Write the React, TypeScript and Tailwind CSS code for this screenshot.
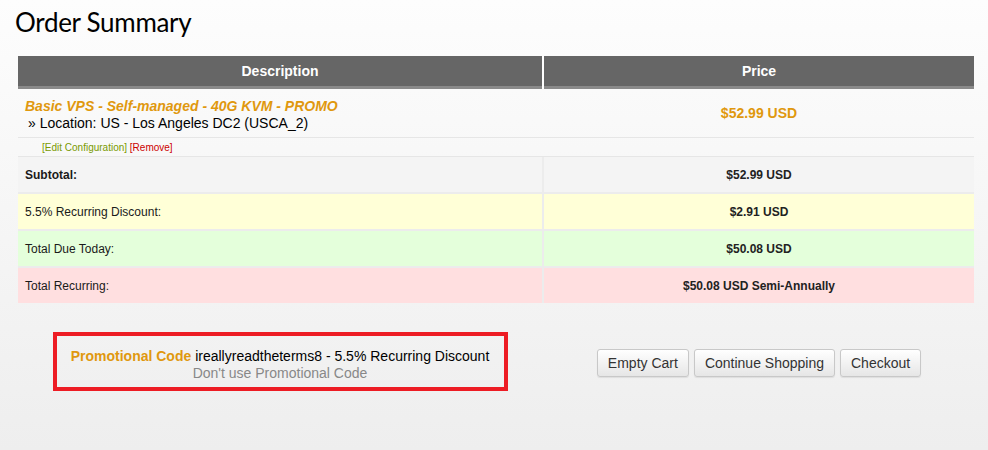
export default function App() {
  const summary = [
    { label: "Subtotal:", price: "$52.99 USD", bg: "bg-[#f4f4f4]", bold: true },
    { label: "5.5% Recurring Discount:", price: "$2.91 USD", bg: "bg-[#ffffd7]", bold: false },
    { label: "Total Due Today:", price: "$50.08 USD", bg: "bg-[#e4ffdb]", bold: false },
    { label: "Total Recurring:", price: "$50.08 USD Semi-Annually", bg: "bg-[#ffdfe0]", bold: false },
  ];

  return (
    <div className="h-[450px] w-[988px] overflow-hidden bg-gradient-to-b from-[#fdfdfd] to-[#eeeeee] font-['Liberation_Sans',Arial,sans-serif] text-[#333]">
      <h1 className="pl-[15px] pt-[2px] font-['Lato',sans-serif] text-[26px] leading-[40px] tracking-[-0.3px] text-black">
        Order Summary
      </h1>

      <div className="ml-[18px] mt-[14px] w-[956px]">
        {/* header */}
        <div className="grid grid-cols-[524px_430px] gap-x-[2px] bg-white text-[14px] font-bold text-white">
          <div className="flex h-[33px] items-center justify-center border-b-[3px] border-[#8a8a8a] bg-[#666]">Description</div>
          <div className="flex h-[33px] items-center justify-center border-b-[3px] border-[#8a8a8a] bg-[#666]">Price</div>
        </div>

        {/* product */}
        <div className="grid grid-cols-[524px_430px] gap-x-[2px] border-b border-[#e6e6e6]">
          <div className="h-[48px] pl-[7px] pt-[9px] text-[14px] leading-[17px]">
            <div className="font-bold italic text-[#e0980e]">Basic VPS - Self-managed - 40G KVM - PROMO</div>
            <div className="pl-[3px] text-black">» Location: US - Los Angeles DC2 (USCA_2)</div>
          </div>
          <div className="flex h-[48px] items-center justify-center text-[14px] font-bold text-[#e0980e]">$52.99 USD</div>
        </div>
        <div className="grid grid-cols-[524px_430px] gap-x-[2px] border-b border-[#e6e6e6]">
          <div className="h-[18px] pl-[24px] pt-[4px] text-[10px] leading-[12px]">
            <span className="text-[#7a9a01]">[Edit Configuration]</span>{" "}
            <span className="text-[#cc0000]">[Remove]</span>
          </div>
          <div className="h-[18px]"></div>
        </div>

        {/* totals */}
        <div className="flex flex-col gap-y-[2px] bg-[#ececec]">
          {summary.map((row) => (
            <div key={row.label} className="grid grid-cols-[524px_430px] gap-x-[2px] text-[12px]">
              <div className={`flex h-[35px] items-center pl-[7px] text-[#1a1a1a] ${row.bg} ${row.bold ? "font-bold" : ""}`}>
                {row.label}
              </div>
              <div className={`flex h-[35px] items-center justify-center font-bold text-[#222] ${row.bg}`}>{row.price}</div>
            </div>
          ))}
        </div>

        {/* promo + actions */}
        <div className="mt-[29px] grid grid-cols-[524px_430px] gap-x-[2px]">
          <div className="flex justify-center">
            <div className="h-[59px] w-[455px] border-[4px] border-[#ed1c24] pt-[12px] text-center text-[14px] leading-[17px]">
              <div>
                <span className="font-bold text-[#e0980e]">Promotional Code</span>{" "}
                <span className="text-black">ireallyreadtheterms8 - 5.5% Recurring Discount</span>
              </div>
              <div className="text-[#888]">Don't use Promotional Code</div>
            </div>
          </div>
          <div className="flex items-start justify-center gap-[5px] pt-[17px]">
            {["Empty Cart", "Continue Shopping", "Checkout"].map((b) => (
              <button
                key={b}
                className="h-[28px] rounded-[3px] border border-[#c8c8c8] bg-gradient-to-b from-white to-[#e6e6e6] px-[10px] text-[14px] text-[#333] shadow-[0_1px_1px_rgba(0,0,0,0.08)]"
              >
                {b}
              </button>
            ))}
          </div>
        </div>
      </div>
    </div>
  );
}
